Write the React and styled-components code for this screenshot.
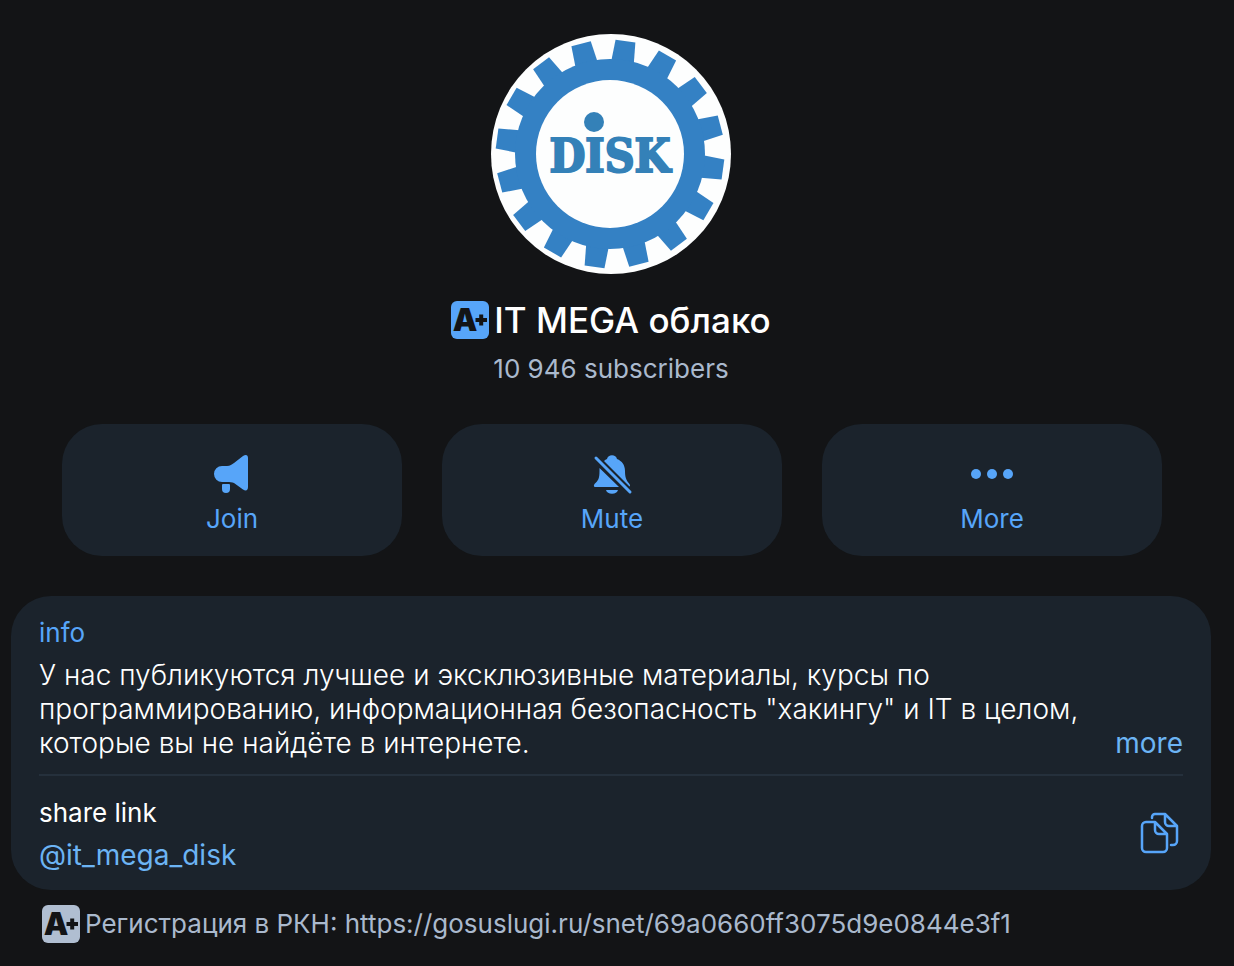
import styled, { createGlobalStyle } from 'styled-components';

const GlobalStyle = createGlobalStyle`
  * {
    box-sizing: border-box;
  }

  body {
    margin: 0;
    background: #131416;
    color: #ffffff;
    font-family: Inter, "Liberation Sans", sans-serif;
    font-weight: 400;
  }
`;

const TEETH = Array.from({ length: 16 }, (_, i) => i * 22.5 + 7.8);

function Avatar() {
  return (
    <AvatarSvg viewBox="0 0 240 240" role="img" aria-label="DISK">
      <circle cx="120" cy="120" r="120" fill="#fdfefe" />
      <g fill="#3481c4">
        {TEETH.map((angle) => (
          <path key={angle} d="M107.500 30 L109 6 H129 L130.500 30 Z" transform={`rotate(${angle} 119 120)`} />
        ))}
        <circle cx="119" cy="120" r="95" />
      </g>
      <circle cx="119" cy="120" r="74" fill="#fdfefe" />
      <circle cx="103" cy="88" r="10" fill="#3481b8" />
      <LogoText x="119" y="138" textAnchor="middle">DISK</LogoText>
    </AvatarSvg>
  );
}

function GradeBadge({ color }) {
  return (
    <BadgeSvg viewBox="0 0 38 38" aria-hidden="true">
      <rect width="38" height="38" rx="6" fill={color} />
      <BadgeText x="14" y="30" textAnchor="middle">A</BadgeText>
      <path d="M24.500 19 H36 M30.200 13.500 V24.500" stroke="#131416" strokeWidth="4" />
    </BadgeSvg>
  );
}

function MegaphoneIcon() {
  return (
    <ActionSvg viewBox="0 0 44 44" aria-hidden="true">
      <path d="M12 14 H17 C20 14 22 12.500 24 11 L33 4 C36 2 38 3 38 6 V35 C38 38.500 36 39.500 33 37.500 L24 31 C22 30 20 30 17 30 H12 A8 8 0 0 1 12 14 Z" />
      <path d="M12 33 Q12 32 13 32 H19 Q20 32 20 33 V37 A4 4 0 0 1 12 37 Z" />
    </ActionSvg>
  );
}

function BellOffIcon() {
  return (
    <ActionSvg viewBox="0 0 44 44" aria-hidden="true">
      <path d="M14 9 C15 8 16 7.500 17 7 A5.200 5.200 0 0 1 27 7 C32 9 35 13 35 19 C35 25 36 28 39.500 32 C40.500 34 40 35 39 34 Z" />
      <path d="M9.500 16 L29 35 H5.500 C3.500 35 3.500 33 5 31.500 C8 28.500 9.500 27 9.500 19 Z" />
      <path d="M16 38 H28 A6.200 5 0 0 1 16 38 Z" />
      <path d="M6 6 L40 40" fill="none" stroke="#57a5f9" strokeWidth="3" strokeLinecap="round" />
    </ActionSvg>
  );
}

function DotsIcon() {
  return (
    <ActionSvg viewBox="0 0 44 44" aria-hidden="true">
      <circle cx="6" cy="22" r="5" />
      <circle cx="22" cy="22" r="5" />
      <circle cx="38" cy="22" r="5" />
    </ActionSvg>
  );
}

function CopyIcon() {
  return (
    <CopySvg viewBox="0 0 40 44" aria-hidden="true">
      <path d="M14 10 H6 A4 4 0 0 0 2 14 V36 A4 4 0 0 0 6 40 H23 A4 4 0 0 0 27 36 V22 L15 10 Z M15 10 V18 A4 4 0 0 0 19 22 H27" />
      <path d="M12 6 V5 A3 3 0 0 1 15 2 H25 L37 14 V29 A4 4 0 0 1 33 33 H31 M25 2 V10 A4 4 0 0 0 29 14 H37" />
    </CopySvg>
  );
}

function ActionButton({ icon, text }) {
  return (
    <Action type="button">
      {icon}
      <span>{text}</span>
    </Action>
  );
}

function App() {
  return (
    <Page>
      <GlobalStyle />
      <Header>
        <Avatar />
        <Title>
          <GradeBadge color="#57a5f9" />
          IT MEGA облако
        </Title>
        <Subscribers>10 946 subscribers</Subscribers>
      </Header>

      <Actions>
        <ActionButton icon={<MegaphoneIcon />} text="Join" />
        <ActionButton icon={<BellOffIcon />} text="Mute" />
        <ActionButton icon={<DotsIcon />} text="More" />
      </Actions>

      <Card>
        <Label $accent>info</Label>
        <InfoRow>
          <Description>
            У нас публикуются лучшее и эксклюзивные материалы, курсы по
            программированию, информационная безопасность "хакингу" и IT в целом,
            которые вы не найдёте в интернете.
          </Description>
          <MoreButton type="button">more</MoreButton>
        </InfoRow>
        <ShareRow>
          <div>
            <Label>share link</Label>
            <ShareLink href="#it_mega_disk">@it_mega_disk</ShareLink>
          </div>
          <CopyButton type="button" aria-label="Copy link">
            <CopyIcon />
          </CopyButton>
        </ShareRow>
      </Card>

      <Footer>
        <GradeBadge color="#b0bed1" />
        Регистрация в РКН: https://gosuslugi.ru/snet/69a0660ff3075d9e0844e3f1
      </Footer>
    </Page>
  );
}

const Page = styled.main`
  padding: 34px 23px 20px 11px;
`;

const Header = styled.header`
  display: flex;
  flex-direction: column;
  align-items: center;
`;

const AvatarSvg = styled.svg`
  width: 240px;
  height: 240px;
`;

const LogoText = styled.text`
  fill: #3481b8;
  stroke: #3481b8;
  stroke-width: 2px;
  font-family: "DejaVu Serif Condensed", "DejaVu Serif", serif;
  font-size: 46px;
  font-weight: 700;
`;

const BadgeSvg = styled.svg`
  width: 38px;
  height: 38px;
  flex-shrink: 0;
`;

const BadgeText = styled.text`
  fill: #131416;
  font-size: 31px;
  font-weight: 900;
`;

const Title = styled.h1`
  display: flex;
  align-items: center;
  gap: 5px;
  margin: 24px 0 0;
  font-size: 35px;
  font-weight: 500;
  line-height: 44px;
`;

const Subscribers = styled.p`
  margin: 10px 0 0;
  color: #aab9cd;
  font-size: 26px;
  line-height: 34px;
`;

const Actions = styled.div`
  display: grid;
  grid-template-columns: repeat(3, 1fr);
  gap: 40px;
  margin: 38px 49px 0 51px;
`;

const Action = styled.button`
  display: flex;
  flex-direction: column;
  align-items: center;
  gap: 6px;
  padding: 28px 0 20px;
  border: 0;
  border-radius: 40px;
  background: #1b232c;
  color: #57a5f9;
  font-family: inherit;
  font-size: 26px;
  font-weight: inherit;
  line-height: 34px;
  cursor: pointer;
`;

const ActionSvg = styled.svg`
  width: 44px;
  height: 44px;
  fill: currentColor;
`;

const Card = styled.section`
  margin-top: 40px;
  padding: 20px 28px 18px;
  border-radius: 40px;
  background: #1b232c;
`;

const Label = styled.div`
  color: ${({ $accent }) => ($accent ? '#57a5f9' : '#ffffff')};
  font-size: 26px;
  line-height: 34px;
`;

const InfoRow = styled.div`
  display: flex;
  align-items: flex-end;
  justify-content: space-between;
  padding: 8px 0 14px;
  border-bottom: 2px solid #25303c;
`;

const Description = styled.p`
  flex: 1;
  margin: 0;
  font-size: 28px;
  font-weight: 300;
  line-height: 34px;
`;

const MoreButton = styled.button`
  padding: 0;
  border: 0;
  background: none;
  color: #6cb4f4;
  font-family: inherit;
  font-size: 28px;
  font-weight: inherit;
  line-height: 34px;
  cursor: pointer;
`;

const ShareRow = styled.div`
  display: flex;
  align-items: center;
  justify-content: space-between;
  padding-top: 20px;
`;

const ShareLink = styled.a`
  display: block;
  margin-top: 8px;
  color: #6cb4f4;
  font-size: 28px;
  line-height: 34px;
  text-decoration: none;
`;

const CopyButton = styled.button`
  display: flex;
  padding: 0 3px 0 0;
  border: 0;
  background: none;
  color: #57a5f9;
  cursor: pointer;
`;

const CopySvg = styled.svg`
  width: 40px;
  height: 44px;
  fill: none;
  stroke: currentColor;
  stroke-width: 2.5px;
  stroke-linejoin: round;
  stroke-linecap: round;
`;

const Footer = styled.footer`
  display: flex;
  align-items: center;
  gap: 5px;
  padding: 15px 31px 0;
  color: #aab9cd;
  font-size: 26px;
  line-height: 34px;
`;

export default App;
